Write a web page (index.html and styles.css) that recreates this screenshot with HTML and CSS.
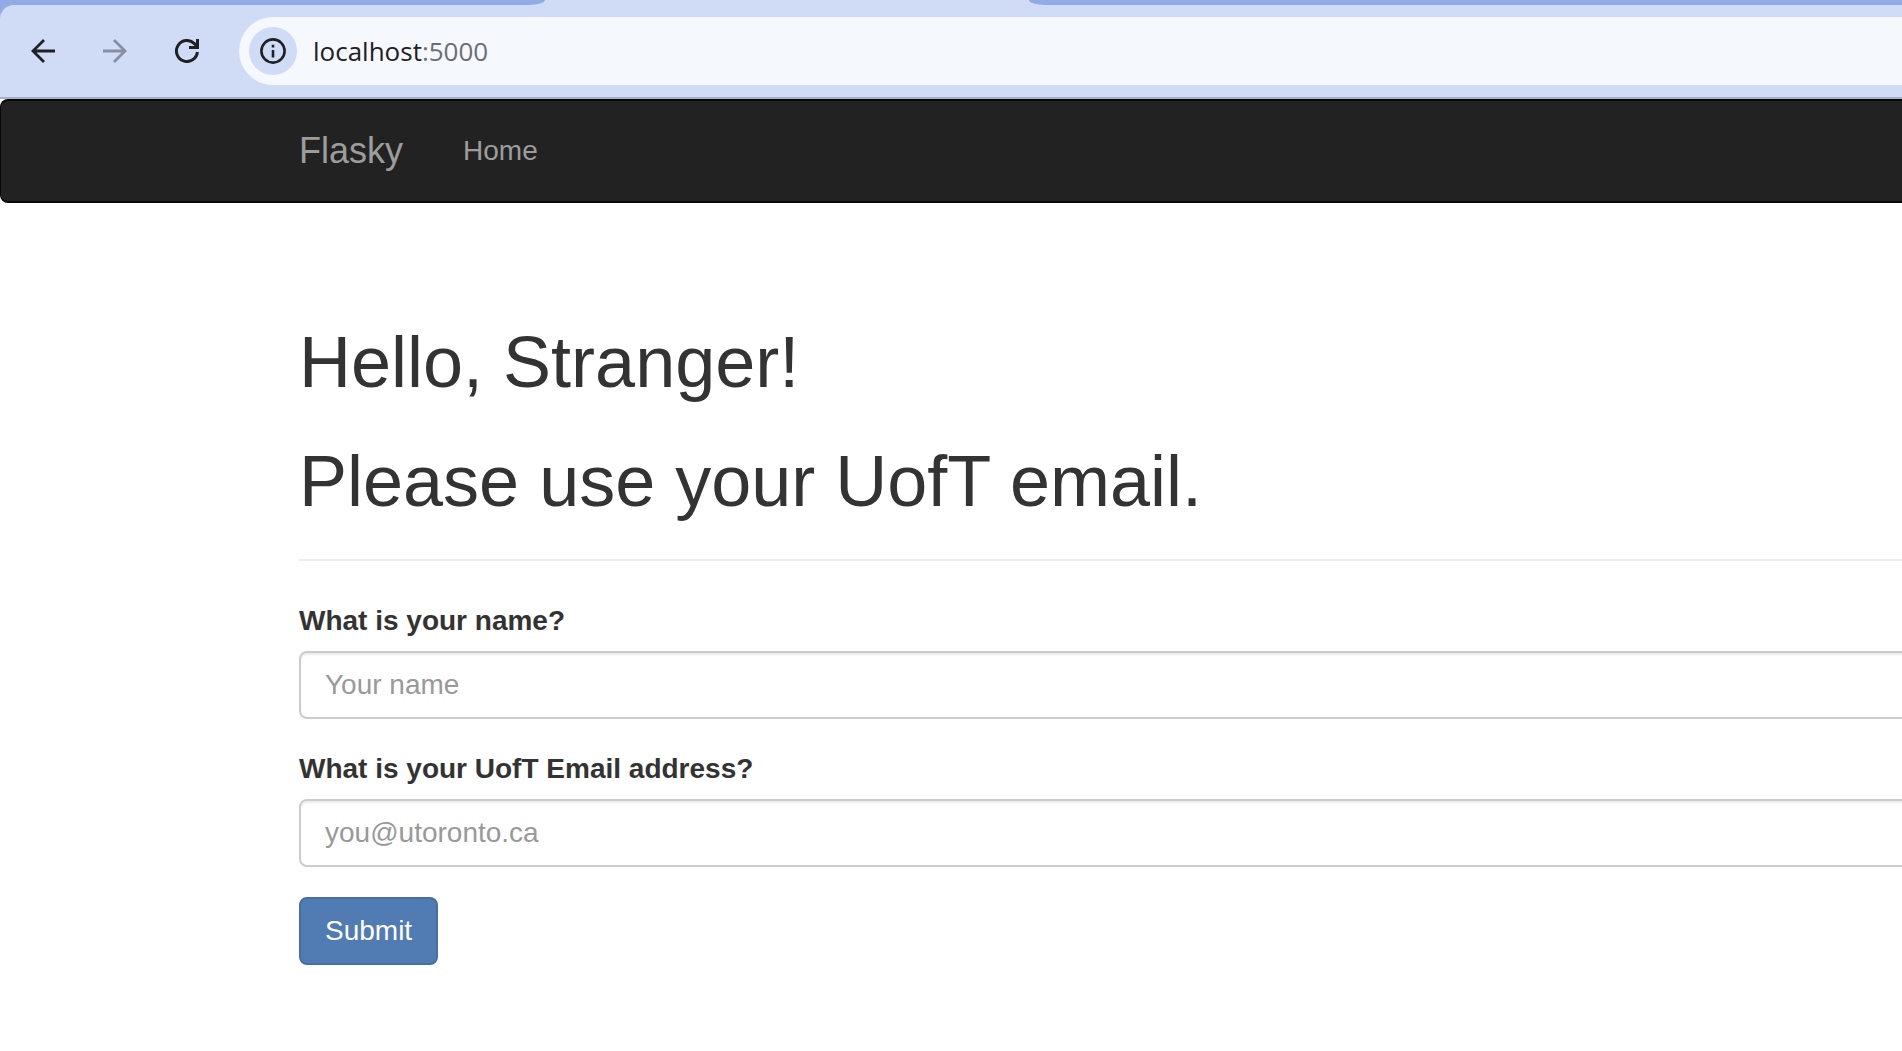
FILE: index.html
```html
<!DOCTYPE html>
<html lang="en">
<head>
  <meta charset="utf-8">
  <title>Flasky</title>
  <link rel="stylesheet" href="styles.css">
</head>
<body>
  <header class="browser">
    <div class="tab-strip">
      <div class="tab tab-before"></div>
      <div class="tab tab-active"></div>
      <div class="tab tab-after"></div>
    </div>
    <div class="toolbar">
      <button class="tool" type="button" aria-label="Back">
        <svg viewBox="0 0 24 24" fill="none" stroke="currentColor" stroke-width="2.800"><path d="M24 12H2M13 1L2 12l11 11"/></svg>
      </button>
      <button class="tool tool-disabled" type="button" aria-label="Forward">
        <svg viewBox="0 0 24 24" fill="none" stroke="currentColor" stroke-width="2.800"><path d="M0 12h22M11 1l11 11-11 11"/></svg>
      </button>
      <button class="tool" type="button" aria-label="Reload">
        <svg viewBox="0 0 24 24" fill="none" stroke="currentColor" stroke-width="3"><path d="M22.400 13A10.500 10.500 0 1 1 19.400 4.600L22 7.500M22.500 0v9M24 8.500H14"/></svg>
      </button>
      <div class="address">
        <button class="site-info" type="button" aria-label="Site information">
          <svg viewBox="0 0 26 26" fill="none" stroke="currentColor" stroke-width="2.600"><circle cx="13" cy="13" r="11.600"/><path d="M13 12v7.500M13 6.800v2.700"/></svg>
        </button>
        <span class="url">localhost<span class="port">:5000</span></span>
      </div>
    </div>
  </header>

  <nav class="navbar">
    <a class="brand" href="#">Flasky</a>
    <a class="nav-link" href="#">Home</a>
  </nav>

  <main class="container">
    <div class="page-header">
      <h1>Hello, Stranger!</h1>
      <h1>Please use your UofT email.</h1>
    </div>
    <form class="form">
      <div class="form-group">
        <label for="name">What is your name?</label>
        <input class="form-control" id="name" type="text" placeholder="Your name">
      </div>
      <div class="form-group">
        <label for="email">What is your UofT Email address?</label>
        <input class="form-control" id="email" type="email" placeholder="you@utoronto.ca">
      </div>
      <button class="submit" type="submit">Submit</button>
    </form>
  </main>
</body>
</html>
```
FILE: styles.css
```css
* {
  box-sizing: border-box;
}

body {
  margin: 0;
  background: #fff;
  color: #333;
  font-family: "Liberation Sans", Arial, sans-serif;
  font-size: 28px;
  line-height: 40px;
}

button,
input {
  margin: 0;
  font: inherit;
}

/* Browser window */
.browser {
  background: #92abe5;
}

.tab-strip {
  display: flex;
  height: 5px;
  background: #d0dcf6;
}

.tab {
  background: #92abe5;
}

.tab-before {
  width: 545px;
  border-bottom-right-radius: 16px 5px;
}

.tab-active {
  width: 484px;
  background: #d0dcf6;
}

.tab-after {
  flex: 1;
  border-bottom-left-radius: 16px 5px;
}

.toolbar {
  display: flex;
  align-items: center;
  gap: 24px;
  padding: 12px 0 12px 19px;
  border-bottom: 2px solid #a7b1c9;
  border-top-left-radius: 14px;
  background: #d0dcf6;
}

.tool {
  display: flex;
  align-items: center;
  justify-content: center;
  width: 48px;
  height: 48px;
  padding: 0;
  border: 0;
  background: none;
  color: #1f2023;
}

.tool svg {
  width: 24px;
  height: 24px;
}

.tool-disabled {
  color: #878e9f;
}

.address {
  display: flex;
  flex: 1;
  align-items: center;
  gap: 16px;
  height: 68px;
  margin-left: 4px;
  padding-left: 10px;
  border-radius: 34px 0 0 34px;
  background: #f5f8fd;
}

.site-info {
  display: flex;
  align-items: center;
  justify-content: center;
  width: 48px;
  height: 48px;
  padding: 0;
  border: 0;
  border-radius: 50%;
  background: #d0dcf6;
  color: #1f2023;
}

.site-info svg {
  width: 26px;
  height: 26px;
}

.url {
  color: #1f2023;
  font-family: "Open Sans", "Noto Sans", sans-serif;
  font-size: 26px;
}

.port {
  color: #6b6e74;
}

/* Page */
.navbar {
  display: flex;
  align-items: center;
  gap: 60px;
  padding: 30px 0 30px 298px;
  border: 2px solid #080808;
  border-right: 0;
  border-left-width: 1px;
  border-radius: 8px 0 0 8px;
  background: #222;
}

.navbar a {
  color: #9d9d9d;
  text-decoration: none;
}

.navbar .brand {
  font-size: 36px;
}

.container {
  padding: 120px 0 86px 299px;
  overflow: hidden;
}

.page-header {
  display: flex;
  flex-direction: column;
  gap: 40px;
  margin-bottom: 40px;
  padding-bottom: 38px;
  border-bottom: 2px solid #eee;
}

h1 {
  margin: 0;
  font-size: 72px;
  font-weight: 500;
  line-height: 79px;
}

/* The form runs past the right edge of the window */
.form {
  display: flex;
  flex-direction: column;
  gap: 30px;
  margin-right: -40px;
}

.form-group {
  display: flex;
  flex-direction: column;
  gap: 10px;
}

label {
  font-weight: 700;
}

.form-control {
  width: 100%;
  height: 68px;
  padding: 12px 24px;
  border: 2px solid #ccc;
  border-radius: 8px;
  background: #fff;
  box-shadow: inset 0 2px 2px rgba(0, 0, 0, 0.075);
  color: #555;
}

.form-control::placeholder {
  color: #999;
  opacity: 1;
}

.submit {
  align-self: flex-start;
  height: 68px;
  padding: 12px 24px;
  border: 2px solid #466fa5;
  border-radius: 8px;
  background: #507bb3;
  color: #fff;
}
```
